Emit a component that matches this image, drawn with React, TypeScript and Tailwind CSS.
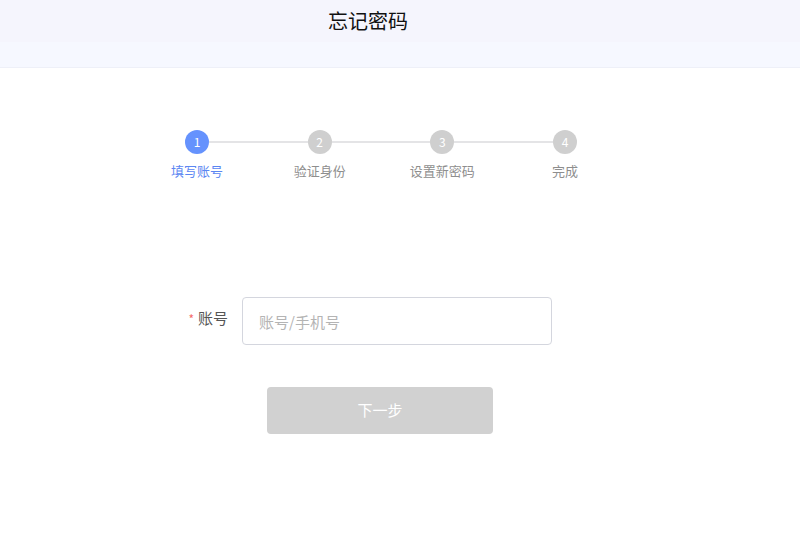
const steps = ['填写账号', '验证身份', '设置新密码', '完成']

function Steps({ current }: { current: number }) {
  return (
    <div className="flex items-start w-[392px]">
      {steps.map((label, i) => (
        <div key={label} className={i < steps.length - 1 ? 'flex flex-1 items-start' : 'flex items-start'}>
          <div className="flex w-6 flex-col items-center">
            <div
              className={
                'flex h-6 w-6 items-center justify-center rounded-full text-[12px] text-white ' +
                (i === current ? 'bg-[#6592fd]' : 'bg-[#cfcfcf]')
              }
            >
              {i + 1}
            </div>
            <div
              className={
                'mt-[9px] whitespace-nowrap text-[13px] leading-4 ' +
                (i === current ? 'text-[#5b86f2]' : 'text-[#8e8e8e]')
              }
            >
              {label}
            </div>
          </div>
          {i < steps.length - 1 && <div className="mt-[11px] h-[2px] flex-1 bg-[#e4e4e6]" />}
        </div>
      ))}
    </div>
  )
}

export default function App() {
  return (
    <div
      className="min-h-[533px] bg-white"
      style={{ fontFamily: '"Noto Sans CJK SC", "Noto Sans", sans-serif' }}
    >
      <header className="border-b border-[#eef0f8]">
        <div className="flex h-[42px] items-center justify-center bg-[#f5f5fd] pr-16">
          <h1 className="text-[20px] leading-none text-[#111]">忘记密码</h1>
        </div>
        <div className="h-[25px] bg-[#f6f8ff]" />
      </header>

      <div className="mt-[62px] flex justify-center pr-[38px]">
        <Steps current={0} />
      </div>

      <form className="mt-[118px] pl-[142px]">
        <div className="flex items-center">
          <label className="w-[86px] pb-[6px] text-right text-[15px] text-[#555]">
            <span className="mr-1 text-[12px] text-[#f56c6c]">*</span>账号
          </label>
          <input
            className="ml-[14px] h-[48px] w-[310px] rounded border border-[#d4d6de] px-4 text-[15px] text-[#333] outline-none placeholder:text-[#b4b4b4]"
            placeholder="账号/手机号"
          />
        </div>
        <button
          type="button"
          disabled
          className="ml-[125px] mt-[42px] h-[47px] w-[226px] rounded bg-[#d1d1d1] text-[15px] text-white"
        >
          下一步
        </button>
      </form>
    </div>
  )
}
